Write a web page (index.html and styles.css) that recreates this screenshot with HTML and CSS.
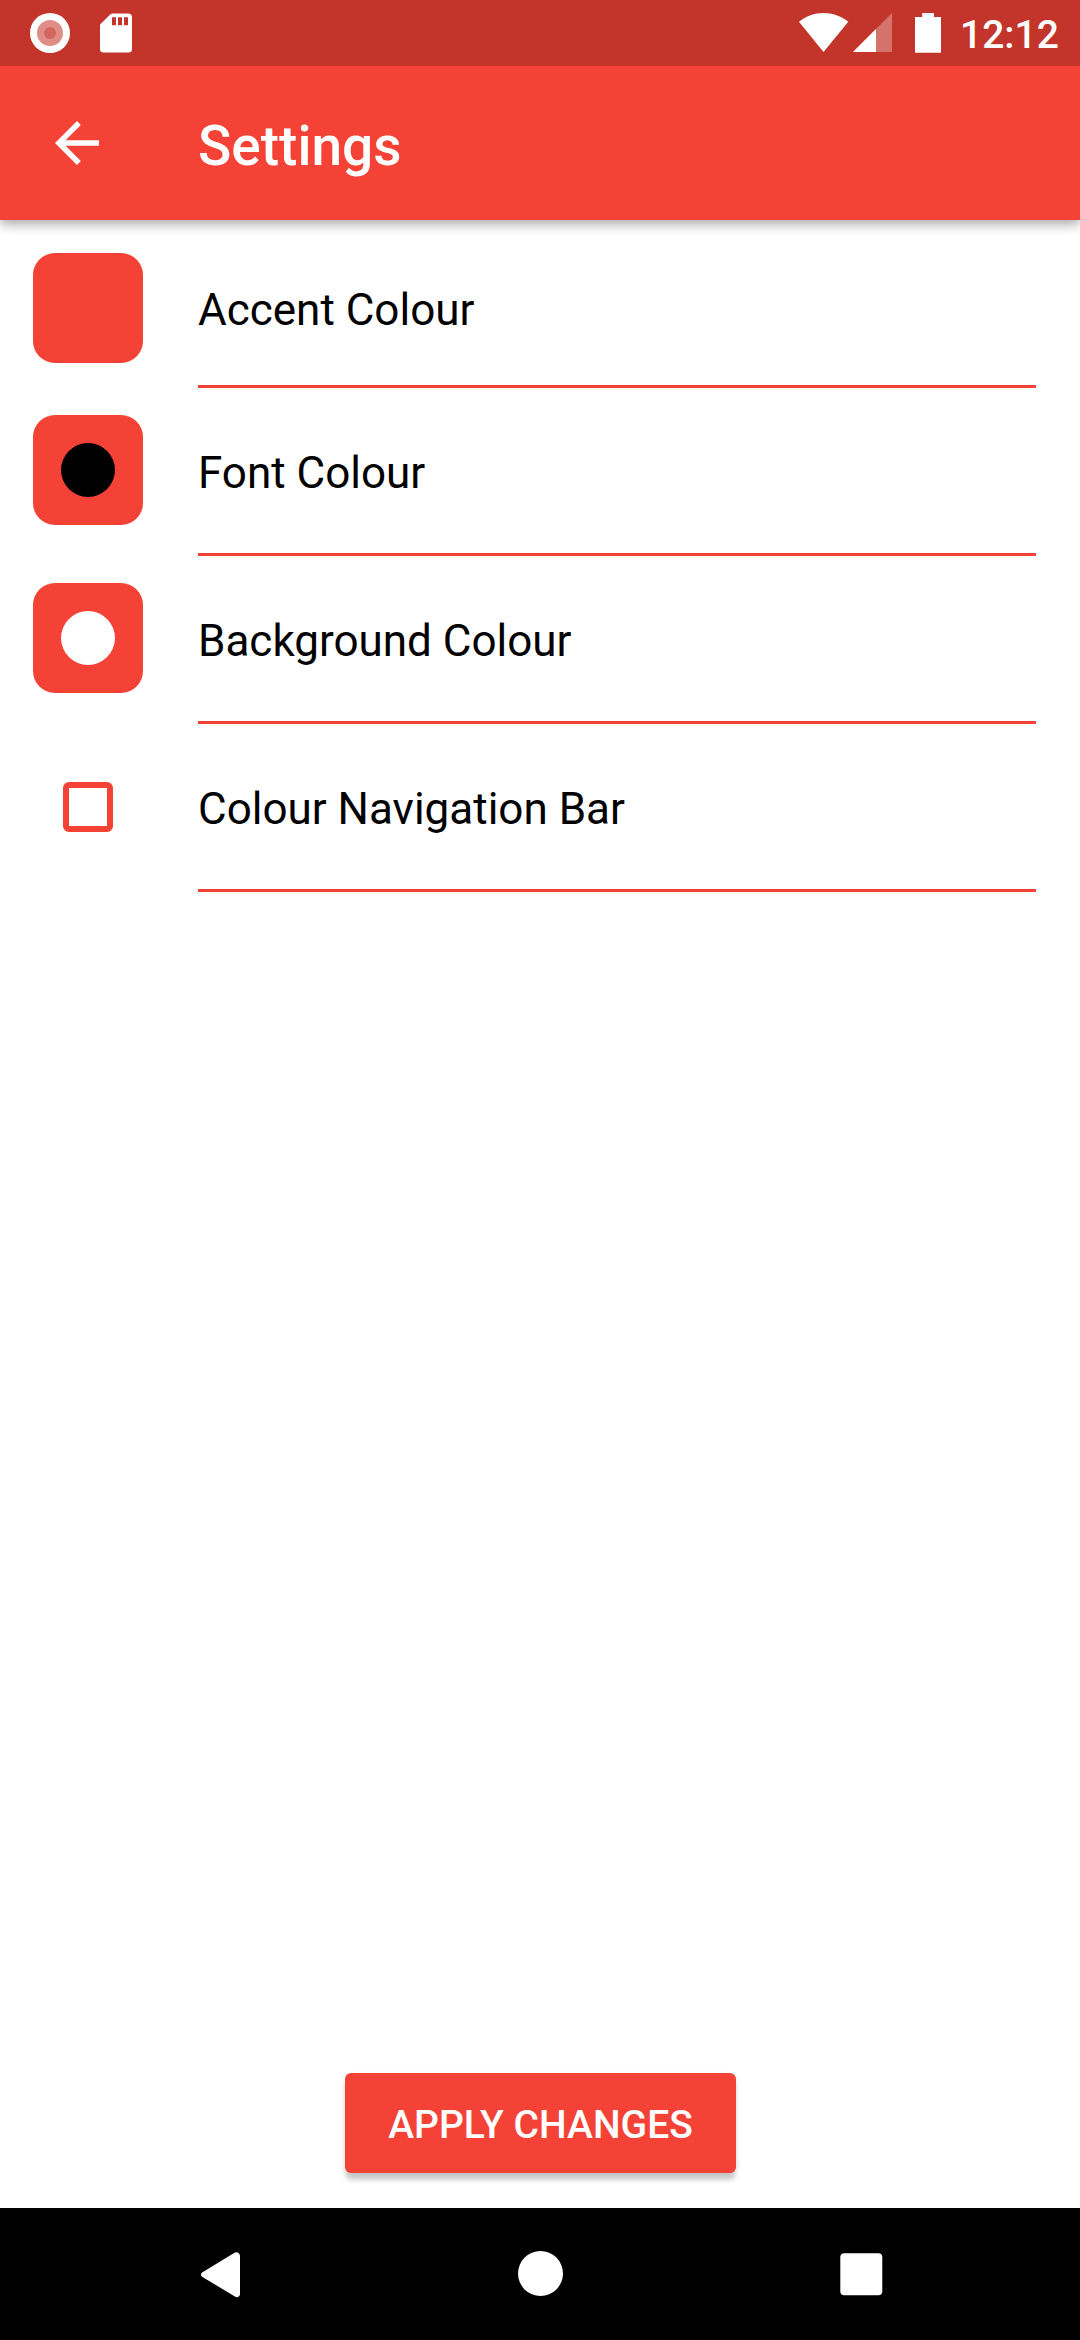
FILE: index.html
```html
<!DOCTYPE html>
<html lang="en">
<head>
<meta charset="utf-8">
<title>Settings</title>
<link rel="stylesheet" href="styles.css">
</head>
<body>
<div class="screen">
  <div class="status-bar">
    <svg class="record-icon" width="40" height="40" viewBox="0 0 40 40"><circle cx="20" cy="20" r="20" fill="#fff"/><circle cx="20" cy="20" r="13" fill="#df8d87"/><circle cx="20" cy="20" r="6" fill="#d3665f"/></svg>
    <svg class="sd-icon" width="32" height="40" viewBox="0 0 32 40"><path fill="#fff" fill-rule="evenodd" d="M12.5 0.5H28a4 4 0 0 1 4 4V36a3.500 3.500 0 0 1-3.500 3.500H3.500A3.500 3.500 0 0 1 0 36V12.500Q0 11.500 .8 10.800L10.500 1.200Q11.200.5 12.500.5ZM12 4.300V12.300H16V4.300ZM18 4.300V12.300H22V4.300ZM24 4.300V12.300H28V4.300Z"/></svg>
    <span class="spacer"></span>
    <svg class="wifi-icon" width="50" height="40" viewBox="0 0 50 40"><path fill="#fff" d="M24.500 39 0 8.700C7 3 15.500 0 24.500 0S42 3 49.300 8.700Z"/></svg>
    <svg class="signal-icon" width="39" height="40" viewBox="0 0 39 40"><path fill="#fff" fill-opacity=".3" d="M0 39 39 0V39Z"/><path fill="#fff" d="M0 39 23 16V39Z"/></svg>
    <svg class="battery-icon" width="26" height="40" viewBox="0 0 26 40"><path fill="#fff" d="M7.200 0H19V4H26V39.700H0V4H7.200Z"/></svg>
    <span class="clock">12:12</span>
  </div>
  <header class="app-bar">
    <svg class="back-icon" width="44" height="44" viewBox="4 4 16 16"><path fill="#fff" d="M20 11H7.830l5.590-5.590L12 4l-8 8 8 8 1.410-1.410L7.830 13H20v-2z"/></svg>
    <h1 class="title">Settings</h1>
  </header>
  <main class="content">
    <div class="row row-first">
      <div class="lead"><span class="swatch"></span></div>
      <div class="label">Accent Colour</div>
    </div>
    <div class="row">
      <div class="lead"><span class="swatch"><span class="dot dot-black"></span></span></div>
      <div class="label">Font Colour</div>
    </div>
    <div class="row">
      <div class="lead"><span class="swatch"><span class="dot dot-white"></span></span></div>
      <div class="label">Background Colour</div>
    </div>
    <div class="row">
      <div class="lead lead-check"><span class="checkbox"></span></div>
      <div class="label">Colour Navigation Bar</div>
    </div>
    <button class="apply">APPLY CHANGES</button>
  </main>
  <nav class="nav-bar">
    <svg class="nav-back" width="40" height="46" viewBox="0 0 40 46"><path fill="#fff" d="M1.500 20.300 33.500.8Q36 -.3 37.800 1.200Q39 2.200 39 4V42Q39 43.800 37.800 44.600Q36 45.800 33.500 44.300L1.500 25Q0 24 0 22.700Q0 21.300 1.500 20.300Z"/></svg>
    <svg class="nav-home" width="46" height="46" viewBox="0 0 46 46"><circle cx="22.500" cy="22.500" r="22.500" fill="#fff"/></svg>
    <svg class="nav-recent" width="43" height="43" viewBox="0 0 43 43"><rect x=".3" y=".3" width="42" height="42" rx="4" fill="#fff"/></svg>
  </nav>
</div>
</body>
</html>
```

FILE: styles.css
```css
* { box-sizing: border-box; }
body { margin: 0; font-family: Roboto, sans-serif; background: #fff; }
svg { display: block; flex: none; }
.screen { width: 1080px; height: 2340px; display: flex; flex-direction: column; }

.status-bar { position: relative; z-index: 1; height: 66px; flex: none; display: flex; align-items: flex-start; padding: 13px 22px 0 30px; background: #c3352b; }
.sd-icon { margin-left: 30px; }
.spacer { flex: 1; }
.signal-icon { margin-left: 4px; }
.battery-icon { margin-left: 23px; }
.clock { width: 98px; margin-left: 19px; color: #fff; font-size: 39px; font-weight: 500; line-height: 44px; white-space: nowrap; }

.app-bar { height: 154px; flex: none; display: flex; align-items: flex-start; padding: 55px 0 0 55px; background: #f44336; box-shadow: 0 4px 11px rgba(0, 0, 0, .35); }
.title { margin: -7px 0 0 99px; color: #fff; font-size: 55px; font-weight: 500; line-height: 64px; }

.content { flex: 1; display: flex; flex-direction: column; }
.row { height: 168px; flex: none; display: flex; padding: 0 44px 0 33px; }
.lead { width: 165px; padding-top: 27px; }
.row-first .lead { padding-top: 33px; }
.lead-check { padding: 58px 0 0 30px; }
.swatch { width: 110px; height: 110px; display: flex; align-items: center; justify-content: center; border-radius: 22px; background: #f44336; }
.dot { width: 54px; height: 54px; border-radius: 50%; }
.dot-black { background: #000; }
.dot-white { background: #fff; }
.checkbox { display: block; width: 50px; height: 50px; border: 6px solid #f44336; border-radius: 6px; }
.label { flex: 1; padding-top: 59px; border-bottom: 3px solid #f44336; color: #000; font-size: 44px; line-height: 52px; }
.row-first .label { padding-top: 64px; }

.apply { width: 391px; height: 100px; margin: auto auto 35px 345px; padding: 5px 0 0; border: 0; border-radius: 6px; background: #f44336; box-shadow: 0 8px 5px -1px rgba(0, 0, 0, .18), 0 3px 7px rgba(0, 0, 0, .08); color: #fff; font: 500 39px/45px Roboto, sans-serif; }

.nav-bar { height: 132px; flex: none; display: flex; align-items: flex-start; justify-content: space-between; padding: 43px 197px 0 201px; background: #000; }
.nav-back { margin-top: 1px; }
.nav-recent { margin-top: 2px; }
```
